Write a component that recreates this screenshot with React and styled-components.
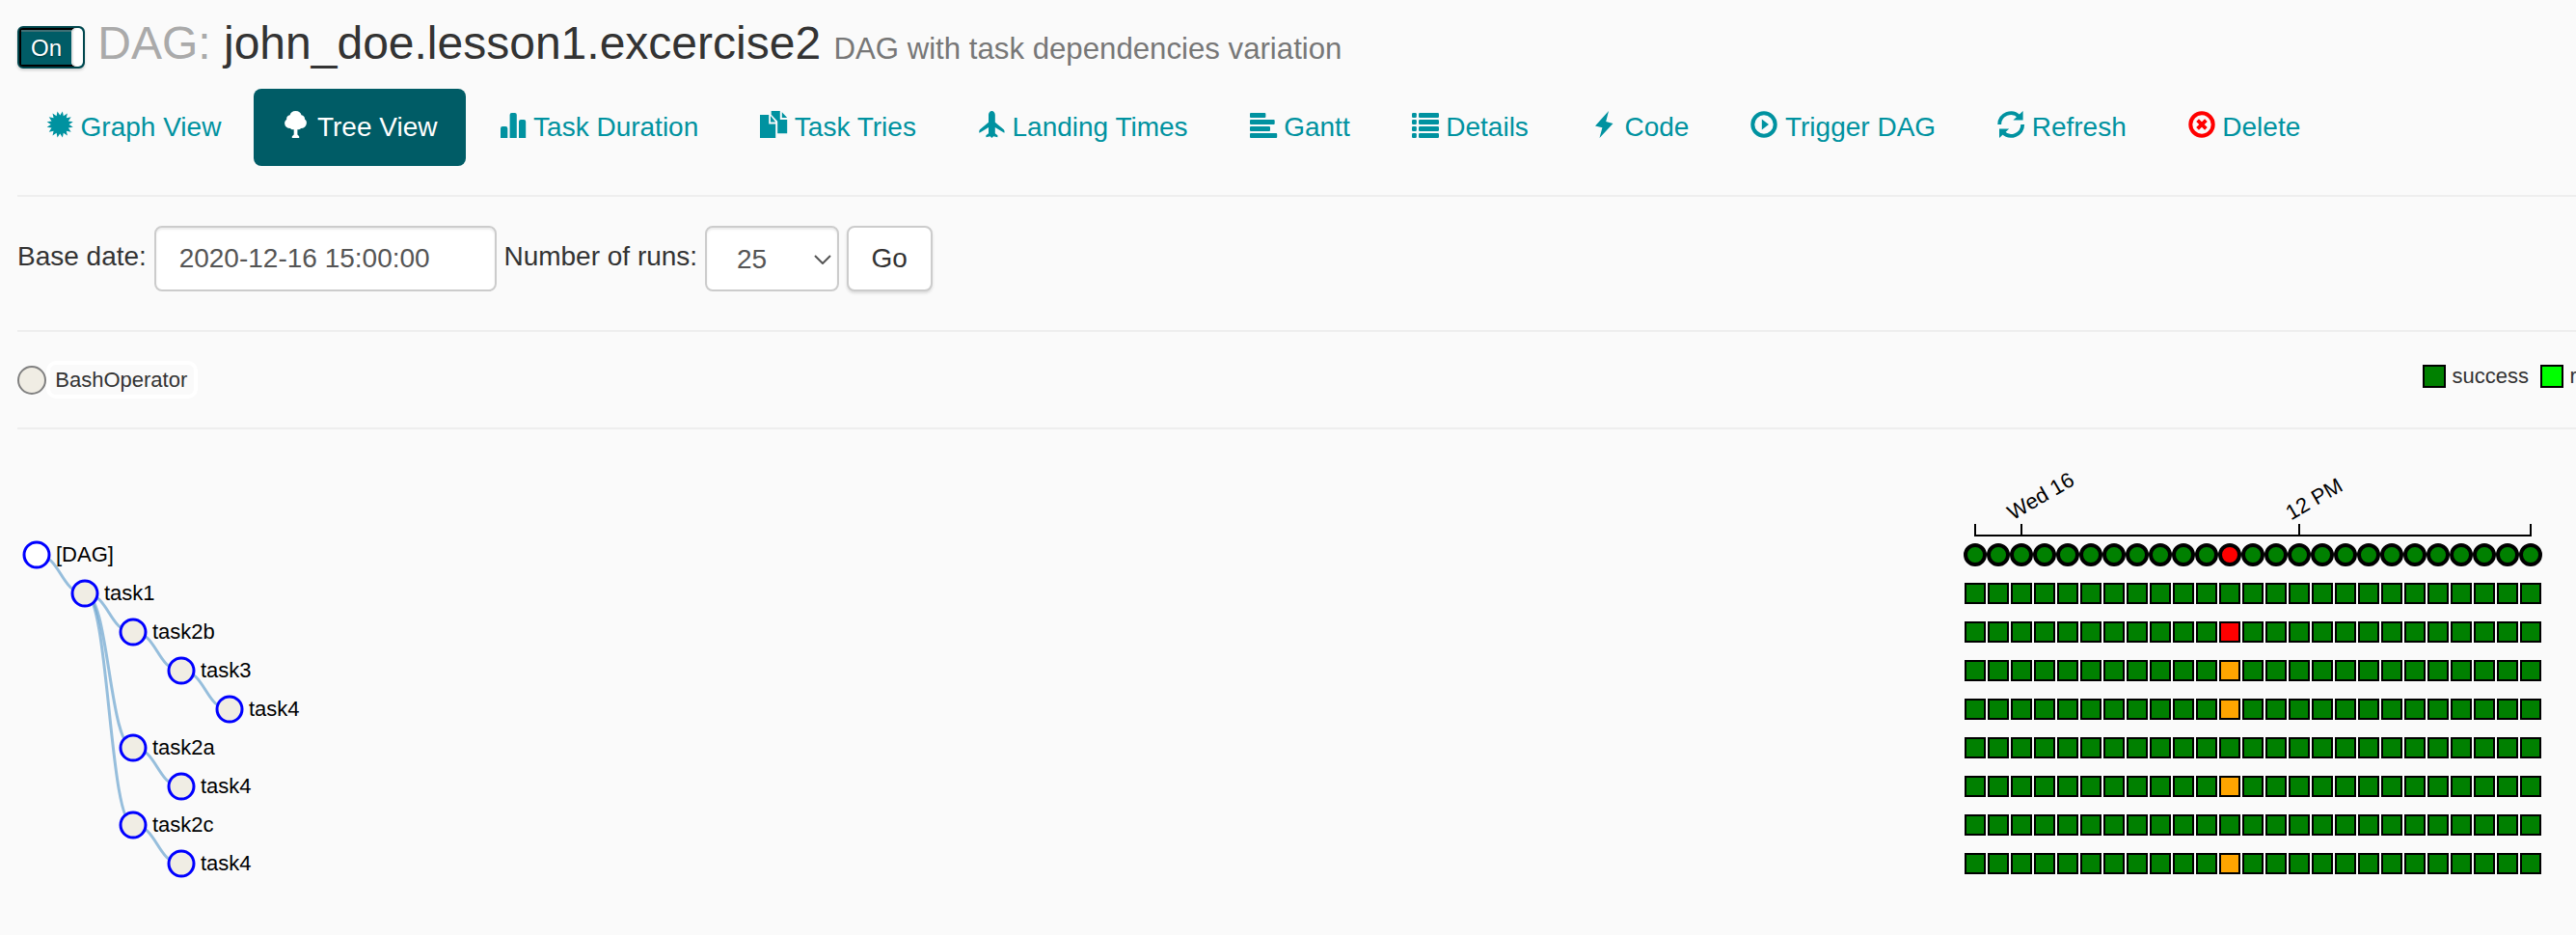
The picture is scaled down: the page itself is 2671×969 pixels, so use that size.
import React from "react";
import styled, { createGlobalStyle } from "styled-components";

const GlobalStyle = createGlobalStyle`
  * { box-sizing: border-box; }
  html, body { margin: 0; padding: 0; background: #fafafa; overflow: hidden; }
  body, input, select, button { font-family: "Liberation Sans", Arial, sans-serif; }
`;

const Page = styled.main`
  height: 969px;
  padding-left: 18px;
  overflow: hidden;
  display: flex;
  flex-direction: column;
  color: #333;
  font-size: 28px;
`;

const Header = styled.header`
  display: flex;
  height: 92px;
  flex: none;
  padding-top: 18px;
  white-space: nowrap;
`;

const Toggle = styled.div`
  display: flex;
  width: 70px;
  height: 44px;
  margin: 9px 13.3px 0 0;
  border: 2px solid #00464d;
  border-radius: 6px;
  background: #005c66;
  box-shadow: 0 2px 3px rgba(0, 0, 0, 0.16);
  overflow: hidden;
`;

const ToggleOn = styled.span`
  flex: 1;
  margin-right: -4px;
  padding-left: 10px;
  color: #fff;
  font-size: 24px;
  line-height: 38px;
  border: solid #000;
  border-width: 2px 0 2px 2px;
  box-shadow: inset 0 2px 0 #3f6f75;
  text-shadow: 0 1px 2px rgba(0, 0, 0, 0.4);
`;

const ToggleHandle = styled.span`
  width: 12px;
  border-radius: 5px;
  background: #fff;
  box-shadow: inset 2px 0 1px #e4e4e4;
`;

const Title = styled.h3`
  margin: 0;
  font-size: 48px;
  font-weight: 400;
  line-height: 53px;
`;

const Muted = styled.span`
  color: #aaa;
`;

const Description = styled.small`
  font-size: 31.2px;
  color: #777;
`;

const Nav = styled.nav`
  display: flex;
  flex: none;
  gap: 4px;
  height: 80px;
`;

const Tab = styled.a`
  display: flex;
  gap: 7.6px;
  padding: 20px 30px;
  border-radius: 8px;
  line-height: 40px;
  white-space: nowrap;
  color: ${(p) => (p.$active ? "#fff" : "#0092a0")};
  background: ${(p) => (p.$active ? "#005c66" : "transparent")};
`;

const Glyph = styled.svg`
  width: 28px;
  height: 28px;
  margin-top: 3px;
  flex: none;
  overflow: visible;
  color: ${(p) => p.$tint || "inherit"};
  fill: currentColor;
`;

const Divider = styled.hr`
  width: 100%;
  height: 2px;
  flex: none;
  border: 0;
  background: #eee;
  margin: ${(p) => p.$top}px 0 ${(p) => p.$bottom}px;
`;

const Form = styled.form`
  display: flex;
  flex: none;
  height: 68px;
  gap: 7.78px;
`;

const Label = styled.label`
  line-height: 40px;
  padding-top: 12px;
  white-space: nowrap;
`;

const DateInput = styled.input`
  width: 355px;
  height: 68px;
  padding: 0 24px;
  border: 2px solid #ccc;
  border-radius: 8px;
  background: #fff;
  box-shadow: inset 0 2px 2px rgba(0, 0, 0, 0.075);
  color: #555;
  font-size: 28px;
`;

const SelectBox = styled.div`
  display: flex;
  align-items: center;
  justify-content: space-between;
  width: 139px;
  height: 68px;
  padding: 2px 6px 0 31px;
  border: 2px solid #ccc;
  border-radius: 8px;
  background: #fff;
  box-shadow: inset 0 2px 2px rgba(0, 0, 0, 0.075);
  color: #555;
`;

const Chevron = styled.svg`
  width: 18px;
  height: 10px;
  fill: none;
  stroke: #555;
  stroke-width: 2;
`;

const GoButton = styled.button`
  width: 89px;
  height: 68px;
  padding: 0;
  border: 2px solid #ccc;
  border-radius: 8px;
  background: #fff;
  box-shadow: 0 2px 3px rgba(0, 0, 0, 0.12);
  color: #333;
  font-size: 28px;
`;

const LegendRow = styled.section`
  display: flex;
  flex: none;
  justify-content: space-between;
  height: 39px;
  font-size: 22px;
`;

const Operator = styled.div`
  display: flex;
  align-items: center;
`;

const OperatorDot = styled.span`
  width: 30px;
  height: 30px;
  border: 2px solid #808080;
  border-radius: 50%;
  background: #f0ede4;
`;

const OperatorName = styled.span`
  height: 39px;
  padding: 0 15px 0 5.3px;
  border: 4px solid #fff;
  border-radius: 10px;
  line-height: 31px;
  width: 157px;
`;

const States = styled.div`
  display: flex;
  width: 159px;
  overflow: hidden;
  padding-top: 4px;
`;

const State = styled.div`
  display: flex;
  flex: none;
  gap: 6.5px;
  margin-right: 12px;
  line-height: 24px;
`;

const Swatch = styled.span`
  width: 24px;
  height: 24px;
  border: 2px solid #000;
  background: ${(p) => p.$color};
`;

const Chart = styled.svg`
  display: block;
  flex: none;
  font-family: "Liberation Sans", Arial, sans-serif;
  font-size: 22px;
  margin-left: -18px;
`;

const starPoints = Array.from({ length: 32 }, (_, i) => {
  const r = i % 2 ? 9.4 : 13.8;
  const a = ((i + 1) * Math.PI) / 16;
  return `${(14.2 + r * Math.sin(a)).toFixed(2)},${(14 - r * Math.cos(a)).toFixed(2)}`;
}).join(" ");

const icons = {
  certificate: <polygon points={starPoints} />,
  tree: (
    <path d="M13.5 0C16.8 0 19 1.8 19.5 4.3C21.8 4.8 23.3 6.5 23 8.6C24.6 9.8 25.2 11.5 24.8 13.2C24.3 16.2 21.8 18 19 17.9C17.8 19.3 16.6 19.6 15.4 19.2V24.6L17.2 26.2V28H9.8V26.2L11.7 24.6V19.2C10 19.6 8.8 19.1 8 18C4.8 18 2.6 16.2 2.2 13.4C1.9 11.4 2.7 9.8 4.2 8.7C3.8 6.4 5.3 4.7 7.6 4.3C8.2 1.8 10.3 0 13.5 0Z" />
  ),
  stats: (
    <path d="M2 28V18a2 2 0 0 1 2-2h3.3a2 2 0 0 1 2 2v10ZM11.6 28V4a2 2 0 0 1 2-2h3.2a2 2 0 0 1 2 2v24ZM21 28V11a2 2 0 0 1 2-2h3.2a2 2 0 0 1 2 2v17Z" />
  ),
  files: (
    <path d="M0 4H9.2V13.5H16.2V28H0ZM11 5.1 16.2 11.4H11ZM11.7 0H20.8V9H28.2V23.2H18.2V10.8L11.7 3.8ZM22.8 1.2 28.2 7H22.8Z" />
  ),
  plane: (
    <path
      transform="translate(1.2 0)"
      d="M13.2 0C15 0 16.6 1.8 16.6 4V11.8L25.6 19.3Q26.8 21 26.1 22.8L16.6 17V23.2L19.2 25.3V27.2L15 26.3 13.2 28 11.4 26.3 7.2 27.2V25.3L9.8 23.2V17L.3 22.8Q-.4 21 .8 19.3L9.8 11.8V4C9.8 1.8 11.4 0 13.2 0Z"
    />
  ),
  align: (
    <g>
      <rect y="2" width="16.4" height="5" rx="1" />
      <rect y="9" width="25.7" height="5" rx="1" />
      <rect y="16" width="21" height="5" rx="1" />
      <rect y="23" width="28.2" height="5" rx="1" />
    </g>
  ),
  list: (
    <g>
      {[2, 9, 16, 23].map((y) => (
        <g key={y}>
          <rect y={y} width="4.8" height="5" rx="1.2" />
          <rect x="7" y={y} width="21" height="5" rx="1.2" />
        </g>
      ))}
    </g>
  ),
  flash: <path d="M19 0 16.2 11 23.5 13 9.5 28 12.4 17.2 5 15.6Z" />,
  play: (
    <g>
      <circle cx="14" cy="14" r="11.7" fill="none" stroke="currentColor" strokeWidth="4" />
      <path d="M11.8 8.6 19 14 11.8 19.4Z" />
    </g>
  ),
  refresh: (
    <g>
      <path
        d="M2.2 14A11.9 11.9 0 0 1 22.6 5.8M26.2 14A11.9 11.9 0 0 1 5.8 22.2"
        fill="none"
        stroke="currentColor"
        strokeWidth="3.8"
      />
      <path d="M26.6 0V9.6H16.4ZM2 28V18.4H12.2Z" />
    </g>
  ),
  remove: (
    <g fill="none" stroke="currentColor" strokeWidth="4">
      <circle cx="14" cy="14" r="11.7" />
      <path d="M9.6 9.6 18.4 18.4M18.4 9.6 9.6 18.4" strokeWidth="3.8" />
    </g>
  ),
};

const tabs = [
  { label: "Graph View", icon: "certificate" },
  { label: "Tree View", icon: "tree", active: true },
  { label: "Task Duration", icon: "stats" },
  { label: "Task Tries", icon: "files" },
  { label: "Landing Times", icon: "plane" },
  { label: "Gantt", icon: "align" },
  { label: "Details", icon: "list" },
  { label: "Code", icon: "flash" },
  { label: "Trigger DAG", icon: "play" },
  { label: "Refresh", icon: "refresh" },
  { label: "Delete", icon: "remove", tint: "#ff0000" },
];

const nodes = [
  { name: "[DAG]", depth: 0 },
  { name: "task1", depth: 1, parent: 0 },
  { name: "task2b", depth: 2, parent: 1, special: "red" },
  { name: "task3", depth: 3, parent: 2, special: "orange" },
  { name: "task4", depth: 4, parent: 3, special: "orange" },
  { name: "task2a", depth: 2, parent: 1 },
  { name: "task4", depth: 3, parent: 5, special: "orange" },
  { name: "task2c", depth: 2, parent: 1 },
  { name: "task4", depth: 3, parent: 7, special: "orange" },
];

const RUNS = 25;
const FAILED_RUN = 11;
const nodeX = (n) => 38 + n.depth * 50;
const rowY = (i) => 130 + i * 40;
const runX = (i) => 2048 + i * 24;

function TreeChart() {
  return (
    <Chart width="2671" height="500" viewBox="0 0 2671 500">
      <g fill="none" stroke="#3182bd" strokeOpacity="0.5" strokeWidth="3">
        {nodes.map((n, i) => {
          if (n.parent === undefined) return null;
          const x0 = nodeX(nodes[n.parent]);
          const y0 = rowY(n.parent);
          const x1 = nodeX(n);
          const mid = (x0 + x1) / 2;
          return <path key={i} d={`M${x0},${y0}C${mid},${y0} ${mid},${rowY(i)} ${x1},${rowY(i)}`} />;
        })}
      </g>
      {nodes.map((n, i) => (
        <g key={i}>
          <circle cx={nodeX(n)} cy={rowY(i)} r="13" fill={i ? "#f0ede4" : "#fff"} stroke="#00f" strokeWidth="3" />
          <text x={nodeX(n) + 20} y={rowY(i) + 7}>{n.name}</text>
        </g>
      ))}
      <path d="M2048 98V110H2624V98M2096 98V110M2384 98V110" fill="none" stroke="#000" strokeWidth="2" />
      <text transform="translate(2087 94.4) rotate(-30)">Wed 16</text>
      <text transform="translate(2375.5 94.4) rotate(-30)">12 PM</text>
      {nodes.map((n, row) =>
        Array.from({ length: RUNS }, (_, i) => {
          const failed = i === FAILED_RUN;
          if (row === 0) {
            return (
              <circle key={i} cx={runX(i)} cy={rowY(0)} r="10" fill={failed ? "red" : "green"} stroke="#000" strokeWidth="4" />
            );
          }
          return (
            <rect
              key={`${row}-${i}`}
              x={runX(i) - 10}
              y={rowY(row) - 10}
              width="20"
              height="20"
              fill={failed && n.special ? n.special : "green"}
              stroke="#000"
              strokeWidth="2"
            />
          );
        })
      )}
    </Chart>
  );
}

export default function App() {
  return (
    <Page>
      <GlobalStyle />
      <Header>
        <Toggle>
          <ToggleOn>On</ToggleOn>
          <ToggleHandle />
        </Toggle>
        <Title>
          <Muted>DAG:</Muted> john_doe.lesson1.excercise2{" "}
          <Description>DAG with task dependencies variation</Description>
        </Title>
      </Header>
      <Nav>
        {tabs.map((t) => (
          <Tab key={t.label} $active={t.active}>
            <Glyph viewBox="0 0 28 28" $tint={t.tint}>{icons[t.icon]}</Glyph>
            {t.label}
          </Tab>
        ))}
      </Nav>
      <Divider $top={30} $bottom={30} />
      <Form>
        <Label>Base date:</Label>
        <DateInput defaultValue="2020-12-16 15:00:00" />
        <Label>Number of runs:</Label>
        <SelectBox>
          25
          <Chevron viewBox="0 0 18 10">
            <path d="M1 1 9 9 17 1" />
          </Chevron>
        </SelectBox>
        <GoButton type="button">Go</GoButton>
      </Form>
      <Divider $top={40} $bottom={30} />
      <LegendRow>
        <Operator>
          <OperatorDot />
          <OperatorName>BashOperator</OperatorName>
        </Operator>
        <States>
          <State>
            <Swatch $color="green" />
            success
          </State>
          <State>
            <Swatch $color="lime" />
            running
          </State>
        </States>
      </LegendRow>
      <Divider $top={30} $bottom={0} />
      <TreeChart />
    </Page>
  );
}
